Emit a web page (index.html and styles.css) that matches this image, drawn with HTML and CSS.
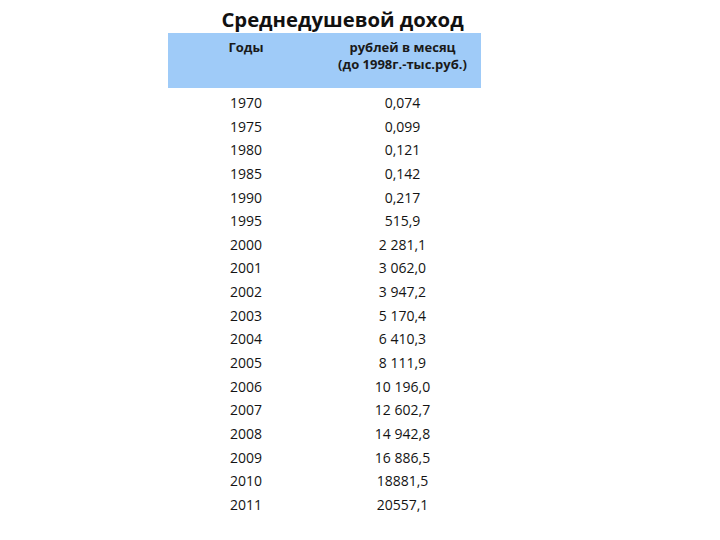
FILE: index.html
```html
<!DOCTYPE html>
<html lang="ru">
<head>
<meta charset="utf-8">
<link rel="stylesheet" href="styles.css">
</head>
<body>
<div class="sheet">
  <h1 class="title">Среднедушевой доход</h1>
  <div class="head">
    <div class="hcell">Годы</div>
    <div class="hcell">рублей в месяц<br>(до 1998г.-тыс.руб.)</div>
  </div>
  <div class="rows">
    <div class="row"><span>1970</span><span>0,074</span></div>
    <div class="row"><span>1975</span><span>0,099</span></div>
    <div class="row"><span>1980</span><span>0,121</span></div>
    <div class="row"><span>1985</span><span>0,142</span></div>
    <div class="row"><span>1990</span><span>0,217</span></div>
    <div class="row"><span>1995</span><span>515,9</span></div>
    <div class="row"><span>2000</span><span>2 281,1</span></div>
    <div class="row"><span>2001</span><span>3 062,0</span></div>
    <div class="row"><span>2002</span><span>3 947,2</span></div>
    <div class="row"><span>2003</span><span>5 170,4</span></div>
    <div class="row"><span>2004</span><span>6 410,3</span></div>
    <div class="row"><span>2005</span><span>8 111,9</span></div>
    <div class="row"><span>2006</span><span>10 196,0</span></div>
    <div class="row"><span>2007</span><span>12 602,7</span></div>
    <div class="row"><span>2008</span><span>14 942,8</span></div>
    <div class="row"><span>2009</span><span>16 886,5</span></div>
    <div class="row"><span>2010</span><span>18881,5</span></div>
    <div class="row"><span>2011</span><span>20557,1</span></div>
  </div>
</div>
</body>
</html>
```
FILE: styles.css
```css
html, body {
  margin: 0;
  padding: 0;
  background: #ffffff;
}
body {
  font-family: "Open Sans", "Liberation Sans", sans-serif;
  color: #141414;
}
.sheet {
  width: 313px;
  margin-left: 168px;
}
.title {
  margin: 6px 0 1px 36px;
  font-size: 20.3px;
  line-height: 26px;
  font-weight: 700;
  text-align: center;
  color: #111;
  white-space: nowrap;
}
.head {
  display: grid;
  grid-template-columns: 156px 157px;
  height: 55px;
  box-sizing: border-box;
  padding-top: 6px;
  background: #9fcbf8;
}
.hcell {
  text-align: center;
  font-size: 13px;
  line-height: 17px;
  font-weight: 700;
  color: #1a1a1a;
}
.rows {
  padding-top: 3px;
}
.row {
  display: grid;
  grid-template-columns: 156px 157px;
  height: 23.65px;
  line-height: 23.6px;
  font-size: 14px;
  text-align: center;
}
```
